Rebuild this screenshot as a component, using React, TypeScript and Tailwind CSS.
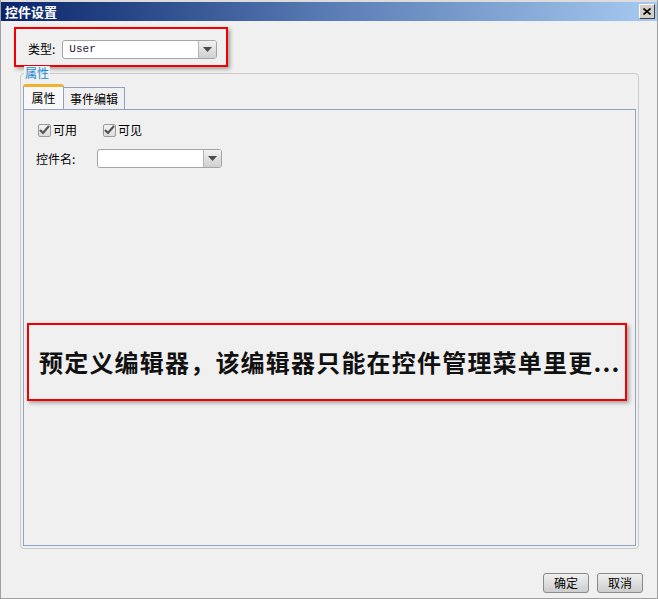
import React from 'react'

const font = { fontFamily: '"Noto Sans CJK SC", "Liberation Sans", sans-serif' }

const Arrow = () => (
  <svg width="9" height="5" viewBox="0 0 9 5">
    <path d="M0 0 H9 L4.5 5 Z" fill="#4a4a4a" />
  </svg>
)

const Check = () => (
  <span className="flex h-[13px] w-[13px] items-center justify-center rounded-[2px] border border-[#9a9a9a] bg-gradient-to-b from-[#f4f4f4] to-[#dcdcdc]">
    <svg width="11" height="10" viewBox="0 0 11 10">
      <path d="M1 5 L4 8 L10 1" stroke="#555" strokeWidth="2.2" fill="none" />
    </svg>
  </span>
)

const Combo = ({ value, w }: { value?: string; w: string }) => (
  <div className={`flex h-[19px] ${w} overflow-hidden rounded-[3px] border border-[#a5a5a5] bg-white`}>
    <div className="flex flex-1 items-center pl-[6px] text-[11px] text-[#2a1a3a]" style={{ fontFamily: '"Liberation Mono", monospace' }}>
      {value}
    </div>
    <div className="flex w-[18px] items-center justify-center border-l border-[#b4b4b4] bg-gradient-to-b from-[#f2f2f2] to-[#cfcfcf]">
      <Arrow />
    </div>
  </div>
)

export default function App() {
  return (
    <div className="flex h-[599px] w-[658px] flex-col border-l border-r border-b border-[#a0a0a0] bg-[#f0f0f0] text-[12px] text-black" style={font}>
      <div className="h-[2px] bg-[#dcdcdc]" />
      <div className="flex h-[19px] items-center justify-between bg-gradient-to-r from-[#0a246a] via-[#5a7cb4] to-[#a6caf0] pl-[4px] pr-[2px]">
        <span className="text-[13px] font-bold leading-none text-white">控件设置</span>
        <div className="flex h-[15px] w-[16px] items-center justify-center border border-t-white border-l-white border-r-[#404040] border-b-[#404040] bg-[#d4d0c8]">
          <svg width="8" height="7" viewBox="0 0 8 7">
            <path d="M0.5 0.5 L7.5 6.5 M7.5 0.5 L0.5 6.5" stroke="#000" strokeWidth="1.6" />
          </svg>
        </div>
      </div>

      <div className="ml-[13px] mt-[6px] flex h-[40px] w-[214px] items-center border-2 border-[#f00000] pl-[12px] pt-[4px] shadow-[2px_2px_4px_rgba(0,0,0,0.35)]">
        <span className="mr-[7px] text-[12px]">类型:</span>
        <Combo value="User" w="w-[155px]" />
      </div>

      <div className="relative ml-[19px] mt-[6px] flex h-[476px] w-[619px] flex-col rounded-[4px] border border-[#cacaca] px-[2px] pb-[2px] pt-[10px]">
        <span className="absolute left-[3px] top-[-8px] bg-[#f0f0f0] px-[1px] text-[12px] leading-[14px] text-[#1a8ad6]">属性</span>
        <div className="flex items-end">
          <div className="flex h-[25px] w-[41px] items-center justify-center rounded-t-[3px] border-x border-t-[3px] border-x-[#8ea3c3] border-t-[#f0b030] bg-[#f8f8f8] text-[12px]">
            属性
          </div>
          <div className="flex h-[22px] w-[61px] items-center justify-center border border-b-0 border-l-0 border-[#8ea3c3] text-[12px]">
            事件编辑
          </div>
        </div>
        <div className="flex flex-1 flex-col border border-[#8ea3c3] pl-[14px] pt-[11px]">
          <div className="flex items-center">
            <Check />
            <span className="ml-[2px]">可用</span>
            <span className="ml-[26px]"><Check /></span>
            <span className="ml-[2px]">可见</span>
          </div>
          <div className="mt-[10px] flex items-center">
            <span className="w-[61px] -ml-[2px]">控件名:</span>
            <Combo w="w-[125px]" />
          </div>
          <div className="-ml-[11px] mt-[155px] flex h-[78px] w-[600px] items-center border-2 border-[#f00000] pl-[10px] shadow-[2px_2px_4px_rgba(0,0,0,0.35)]">
            <span className="whitespace-nowrap text-[24px] font-bold tracking-[1.2px] text-[#111]">
              预定义编辑器，该编辑器只能在控件管理菜单里更...
            </span>
          </div>
        </div>
      </div>

      <div className="mt-[24px] flex justify-end gap-[8px] pr-[14px]">
        <button className="h-[20px] w-[46px] rounded-[3px] border border-[#8a8a8a] bg-gradient-to-b from-[#f0f0f0] to-[#cdcdcd] text-[12px]">确定</button>
        <button className="h-[20px] w-[46px] rounded-[3px] border border-[#8a8a8a] bg-gradient-to-b from-[#f0f0f0] to-[#cdcdcd] text-[12px]">取消</button>
      </div>
    </div>
  )
}
